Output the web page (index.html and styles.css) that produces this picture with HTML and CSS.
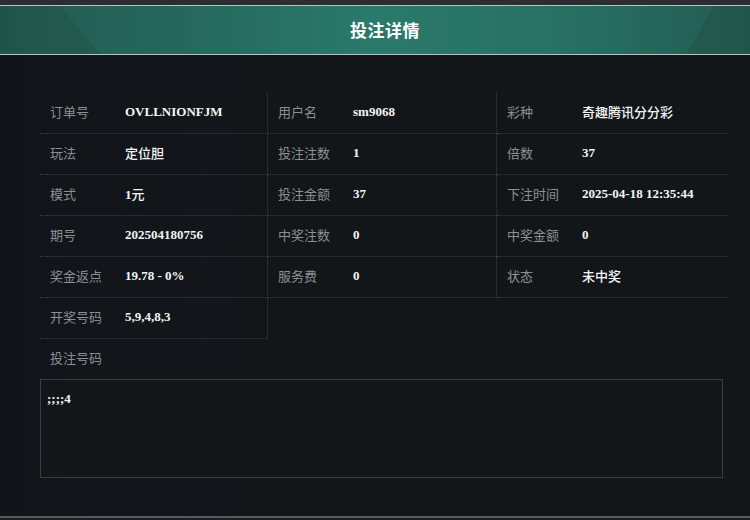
FILE: index.html
```html
<!DOCTYPE html>
<html lang="zh-CN">
<head>
<meta charset="utf-8">
<title>投注详情</title>
<link rel="stylesheet" href="styles.css">
</head>
<body>
<div class="page">
  <div class="topbar"></div>
  <header class="header"><h1 class="title">投注详情</h1></header>
  <main class="content">
    <div class="grid">
      <div class="cell"><span class="label">订单号</span><span class="value">OVLLNIONFJM</span></div>
      <div class="cell"><span class="label">用户名</span><span class="value">sm9068</span></div>
      <div class="cell last"><span class="label">彩种</span><span class="value cjk">奇趣腾讯分分彩</span></div>

      <div class="cell"><span class="label">玩法</span><span class="value cjk">定位胆</span></div>
      <div class="cell"><span class="label">投注注数</span><span class="value">1</span></div>
      <div class="cell last"><span class="label">倍数</span><span class="value">37</span></div>

      <div class="cell"><span class="label">模式</span><span class="value">1<span class="cjk">元</span></span></div>
      <div class="cell"><span class="label">投注金额</span><span class="value">37</span></div>
      <div class="cell last"><span class="label">下注时间</span><span class="value">2025-04-18 12:35:44</span></div>

      <div class="cell"><span class="label">期号</span><span class="value">202504180756</span></div>
      <div class="cell"><span class="label">中奖注数</span><span class="value">0</span></div>
      <div class="cell last"><span class="label">中奖金额</span><span class="value">0</span></div>

      <div class="cell"><span class="label">奖金返点</span><span class="value">19.78 - 0%</span></div>
      <div class="cell"><span class="label">服务费</span><span class="value">0</span></div>
      <div class="cell last"><span class="label">状态</span><span class="value cjk">未中奖</span></div>

      <div class="cell"><span class="label">开奖号码</span><span class="value">5,9,4,8,3</span></div>
    </div>
    <div class="bet-label">投注号码</div>
    <div class="bet-box">;;;;4</div>
  </main>
  <div class="bottombar"></div>
</div>
</body>
</html>
```
FILE: styles.css
```css
* { box-sizing: border-box; }
html, body { margin: 0; padding: 0; }
body {
  width: 750px;
  height: 520px;
  overflow: hidden;
  background: #121519;
  font-family: "Noto Sans CJK SC", "Noto Sans", sans-serif;
}
.page {
  display: flex;
  flex-direction: column;
  height: 520px;
}
.topbar {
  height: 5px;
  background: #2a2d32;
}
.header {
  position: relative;
  height: 50px;
  border-top: 1px solid #b9c4c2;
  border-bottom: 1px solid #b9c4c2;
  background: linear-gradient(90deg, #245a4f 0%, #276b5f 30%, #2a7a6c 50%, #287063 75%, #245c51 100%);
  display: flex;
  align-items: center;
  justify-content: center;
  padding-left: 20px;
  overflow: hidden;
}
.header::before {
  content: "";
  position: absolute;
  left: 0; top: 0; bottom: 0;
  width: 110px;
  background: rgba(20, 60, 50, 0.18);
  clip-path: polygon(0 0, 60px 0, 100px 100%, 0 100%);
}
.header::after {
  content: "";
  position: absolute;
  right: 0; top: 0; bottom: 0;
  width: 70px;
  background: rgba(20, 55, 48, 0.18);
  clip-path: polygon(34px 0, 100% 0, 100% 100%, 6px 100%);
}
.title {
  position: relative;
  z-index: 1;
  margin: 0;
  font-size: 17px;
  font-weight: bold;
  color: #ffffff;
  letter-spacing: 0.5px;
  line-height: 20px;
}
.content {
  flex: 1;
  padding: 38px 23px 0 40px;
  background: linear-gradient(90deg, #11141a 0%, #131619 40%, #131619 100%);
}
.grid {
  display: grid;
  grid-template-columns: 228px 229px 230px;
}
.cell {
  height: 41px;
  display: flex;
  align-items: center;
  padding-left: 10px;
  padding-bottom: 2px;
  border-right: 1px dotted #3d4046;
  border-bottom: 1px dotted #3d4046;
}
.cell.last { border-right: none; }
.label {
  width: 75px;
  flex: none;
  font-size: 13px;
  line-height: 16px;
  color: #8c8f93;
}
.value {
  font-family: "Liberation Serif", "Noto Sans CJK SC", serif;
  font-weight: bold;
  font-size: 13px;
  line-height: 16px;
  color: #f4f4f4;
}
.cjk {
  font-family: "Noto Sans CJK SC", sans-serif;
  font-weight: 500;
}
.bet-label {
  height: 40px;
  display: flex;
  align-items: center;
  padding-left: 10px;
  padding-bottom: 2px;
  font-size: 13px;
  line-height: 16px;
  color: #8c8f93;
}
.bet-box {
  width: 683px;
  height: 99px;
  border: 1px solid #3a3d41;
  background: #131619;
  padding: 11px 6px;
  font-family: "Liberation Serif", serif;
  font-weight: bold;
  font-size: 13px;
  color: #f4f4f4;
  line-height: 16px;
}
.bottombar {
  height: 4px;
  border-top: 2px solid #55585c;
  background: #1b1d21;
}
```
